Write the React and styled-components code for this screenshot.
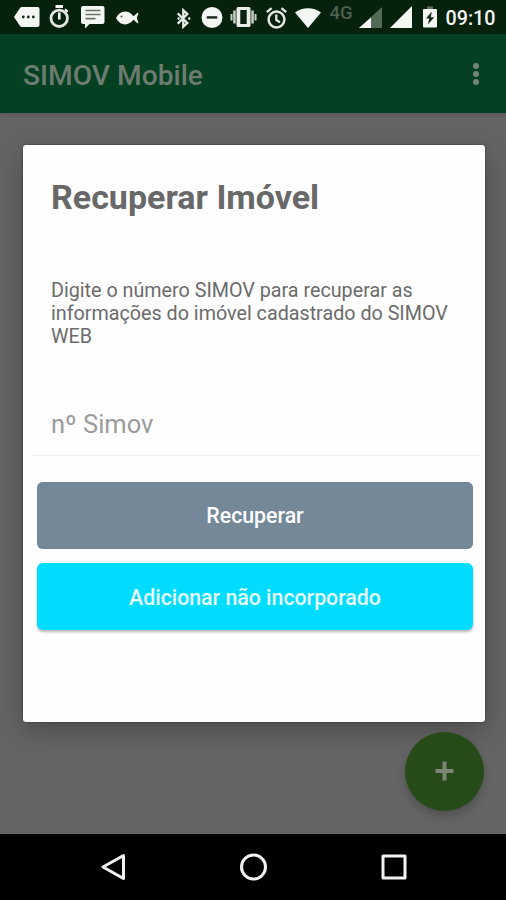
import styled, { createGlobalStyle } from "styled-components";

const GlobalStyle = createGlobalStyle`
  * {
    box-sizing: border-box;
  }

  body {
    margin: 0;
    background: #000;
    font-family: Roboto, "Liberation Sans", sans-serif;
  }
`

const Screen = styled.div`
  position: relative;
  display: flex;
  flex-direction: column;
  width: 506px;
  height: 900px;
  overflow: hidden;
  background: #646464;
`

const StatusBar = styled.header`
  display: flex;
  align-items: flex-start;
  flex: 0 0 34px;
  background: #06220d;
  color: #f4f6f3;
`

const StatusIcon = styled.svg`
  flex: none;
  display: block;
  margin-left: ${({ $gap }) => $gap}px;
  margin-top: ${({ $top }) => $top}px;
  fill: #f4f6f3;
`

const Network = styled.span`
  width: 25px;
  margin: 3px 0 0 9px;
  font-size: 18.5px;
  line-height: 20px;
  font-weight: 500;
  color: #4c5f50;
`

const Clock = styled.time`
  margin: 7px 0 0 9px;
  font-size: 19.7px;
  line-height: 23px;
  font-weight: 500;
  white-space: nowrap;
`

const AppBar = styled.div`
  z-index: 1;
  display: flex;
  align-items: center;
  justify-content: space-between;
  flex: 0 0 79px;
  padding: 2px 27px 0 23px;
  background: #054022;
  box-shadow: 0 2px 4px rgba(0, 0, 0, 0.12);
`

const AppTitle = styled.h1`
  margin: 2px 0 0;
  font-size: 28.2px;
  line-height: 32px;
  font-weight: 500;
  color: #6c7c70;
`

const MenuButton = styled.button`
  display: flex;
  flex-direction: column;
  gap: 2.4px;
  margin-bottom: 1px;
  padding: 0;
  border: none;
  background: none;

  i {
    width: 6px;
    height: 6px;
    border-radius: 50%;
    background: #74857a;
  }
`

const Content = styled.main`
  flex: 1;
  padding: 32px 21.5px 0 22.5px;
`

const Dialog = styled.section`
  height: 577px;
  padding: 0 11.5px 0 14.5px;
  background: #fefefe;
  border-radius: 3px;
  box-shadow: 0 0 2px rgba(0, 0, 0, 0.5), 0 8px 26px rgba(0, 0, 0, 0.25);
`

const DialogTitle = styled.h2`
  margin: 0 0 0 14px;
  padding-top: 32px;
  font-size: 34px;
  line-height: 40px;
  font-weight: 700;
  color: #686868;
`

const Message = styled.p`
  margin: 62px 0 0 14px;
  font-size: 19.73px;
  line-height: 23px;
  color: #6b6b6b;
  white-space: pre-line;
`

const Input = styled.input`
  display: block;
  width: calc(100% + 14px);
  height: 64px;
  margin: 44px -7px 0;
  padding: 0 21px;
  border: none;
  border-bottom: 1px solid #f1f1f1;
  background: none;
  font: 400 25.5px Roboto, "Liberation Sans", sans-serif;
  outline: none;

  &::placeholder {
    color: #9b9b9b;
    opacity: 1;
  }
`

const Actions = styled.div`
  display: flex;
  flex-direction: column;
  gap: 14px;
  margin-top: 26px;
`

const Button = styled.button`
  height: 67px;
  padding: ${({ $primary }) => ($primary ? '2px' : '0')} 0 0;
  border: none;
  border-radius: 6px;
  background: ${({ $primary }) => ($primary ? '#00dcff' : '#758898')};
  box-shadow: ${({ $primary }) => ($primary ? '0 2px 3px rgba(0, 0, 0, 0.28)' : 'inset 0 0 1px #52677b')};
  color: ${({ $primary }) => ($primary ? '#e9fdff' : '#fff')};
  font: 500 21.3px Roboto, "Liberation Sans", sans-serif;
`

const Fab = styled.button`
  position: absolute;
  right: 22px;
  bottom: 89.5px;
  display: flex;
  align-items: center;
  justify-content: center;
  width: 79px;
  height: 79px;
  padding: 0;
  border: none;
  border-radius: 50%;
  background: #264b19;
  box-shadow: 0 5px 9px rgba(0, 0, 0, 0.2);
`

const NavBar = styled.nav`
  display: flex;
  align-items: center;
  justify-content: space-between;
  flex: 0 0 66px;
  padding: 0 99px 0 100px;
  background: #000;

  svg {
    fill: none;
    stroke: #f2f2f2;
    stroke-width: 3;
    stroke-linejoin: round;
  }
`

const Notifications = () => (
  <>
    <StatusIcon $gap={13.5} $top={7} width="26" height="20" viewBox="0 0 26 20">
      <path d="M8 0h15.5Q25.5 0 25.5 2v16q0 2-2 2H8q-1.300 0-2-1L0 10 6 1q.7-1 2-1z" />
      <g fill="#1c2c1f">
        <circle cx="9.300" cy="10" r="1.400" />
        <circle cx="14.300" cy="10" r="1.400" />
        <circle cx="19.300" cy="10" r="1.400" />
      </g>
    </StatusIcon>
    <StatusIcon $gap={9.5} $top={5} width="21" height="23" viewBox="0 0 21 23">
      <path d="M6.500 0h7.500v3H6.500z" />
      <circle cx="10.200" cy="13.300" r="8.200" fill="none" stroke="#e4e8e1" strokeWidth="2.800" />
      <path d="M9 7.500h2.600V14.500H9zM16.800 3.500l2.600 2.600-1.600 1.600-2.600-2.600z" />
    </StatusIcon>
    <StatusIcon $gap={11} $top={5.5} width="24" height="23" viewBox="0 0 24 23">
      <path d="M2 0h19.500q2 0 2 2v14q0 2-2 2H8.500L4 22.500V18H2q-2 0-2-2V2q0-2 2-2z" />
      <path d="M4.500 4.500h15M4.500 8.500h15M4.500 12.700h10" fill="none" stroke="#66746a" strokeWidth="1.700" />
    </StatusIcon>
    <StatusIcon $gap={11} $top={10.5} width="23" height="14" viewBox="0 0 23 14">
      <path d="M0 7C2.500 2.500 5.500 .5 9 .5c3.800 0 6 2 8.500 4.700L21.500 1.800c.6-.4 1.100 0 .9.800L20.800 7l1.600 4.400c.2.800-.3 1.200-.9.800L17.500 8.800c-2.500 2.700-4.700 4.700-8.500 4.700C5.500 13.500 2.500 11.500 0 7z" />
      <circle cx="5.500" cy="5.500" r="1" fill="#445347" />
    </StatusIcon>
  </>
)

const SystemIcons = () => (
  <>
    <StatusIcon $gap={37.5} $top={7.5} width="14" height="21" viewBox="0 0 14 21">
      <path d="M.7 5.200L10.300 15 6.300 18.700V2.300L10.300 6 .7 15.800" fill="none" stroke="#e9ece7" strokeWidth="2.300" />
      <circle cx="1.600" cy="10.500" r="1.200" />
      <circle cx="12.200" cy="10.500" r="1.200" />
    </StatusIcon>
    <StatusIcon $gap={10} $top={7} width="22" height="21" viewBox="0 0 22 21">
      <circle cx="11" cy="10.500" r="10.500" />
      <path d="M5.800 9.200h10.400v2.400H5.800z" fill="#17251a" />
    </StatusIcon>
    <StatusIcon $gap={7.5} $top={7} width="27" height="20" viewBox="0 0 27 20">
      <path d="M8 0h11q1.500 0 1.500 1.500v17q0 1.500-1.500 1.500H8q-1.500 0-1.500-1.500v-17Q6.500 0 8 0zM10.300 3v14h6.400V3z" fillRule="evenodd" fill="#e9ece7" />
      <path d="M3.200 3.500h2.500v13H3.200zM.5 7h2v6.500h-2zM21.300 3.500h2.500v13h-2.500zM24.500 7h2v6.500h-2z" fill="#c9d0c8" />
    </StatusIcon>
    <StatusIcon $gap={8.5} $top={6.5} width="21" height="22" viewBox="0 0 21 22">
      <circle cx="10.500" cy="12.500" r="7.900" fill="none" stroke="#e4e8e1" strokeWidth="2.500" />
      <path d="M.8 5.200L5.600 1.100M20.200 5.200L15.400 1.100M10.300 7.500V13l3.700 2.300" fill="none" stroke="#e4e8e1" strokeWidth="2.300" />
    </StatusIcon>
    <StatusIcon $gap={8} $top={8} width="26" height="20" viewBox="0 0 26 20">
      <path d="M0 4.500C7-1.200 19-1.200 26 4.500L13 20z" />
    </StatusIcon>
    <Network>4G</Network>
    <StatusIcon $gap={4} $top={7} width="23" height="21" viewBox="0 0 23 21">
      <path d="M23 0v21H0z" fill="#526a56" />
      <path d="M12 10.500V21H0z" />
    </StatusIcon>
    <StatusIcon $gap={8} $top={6} width="22" height="22" viewBox="0 0 22 22">
      <path d="M22 0v22H0z" />
    </StatusIcon>
    <StatusIcon $gap={11} $top={6} width="14" height="22" viewBox="0 0 14 22">
      <path d="M4 .5h6V3H4z" fill="#627166" />
      <path d="M1 3h12q1 0 1 1v16.500q0 1-1 1H1q-1 0-1-1V4q0-1 1-1z" />
      <path d="M8.800 5.500L3 12.500h3.200L5 18.500l6.200-7.300H7.800z" fill="#17251a" />
    </StatusIcon>
    <Clock>09:10</Clock>
  </>
)

export default function App() {
  return (
    <>
      <GlobalStyle />
      <Screen>
        <StatusBar>
          <Notifications />
          <SystemIcons />
        </StatusBar>
        <AppBar>
          <AppTitle>SIMOV Mobile</AppTitle>
          <MenuButton aria-label="Menu">
            <i /><i /><i />
          </MenuButton>
        </AppBar>
        <Content>
          <Dialog>
            <DialogTitle>Recuperar Imóvel</DialogTitle>
            <Message>
              {'Digite o número SIMOV para recuperar as\ninformações do imóvel cadastrado do SIMOV\nWEB'}
            </Message>
            <Input placeholder="nº Simov" />
            <Actions>
              <Button>Recuperar</Button>
              <Button $primary>Adicionar não incorporado</Button>
            </Actions>
          </Dialog>
        </Content>
        <Fab aria-label="Adicionar">
          <svg width="19" height="20" viewBox="0 0 19 20">
            <path d="M9.500 .5v19M.5 10h18" stroke="#7b8675" strokeWidth="4" />
          </svg>
        </Fab>
        <NavBar>
          <svg width="26" height="28" viewBox="0 0 26 28">
            <path d="M23.500 2.500v23L3 14z" />
          </svg>
          <svg width="28" height="28" viewBox="0 0 28 28">
            <circle cx="13.500" cy="14" r="12" />
          </svg>
          <svg width="26" height="26" viewBox="0 0 26 26">
            <rect x="2" y="2" width="22" height="22" />
          </svg>
        </NavBar>
      </Screen>
    </>
  )
}
